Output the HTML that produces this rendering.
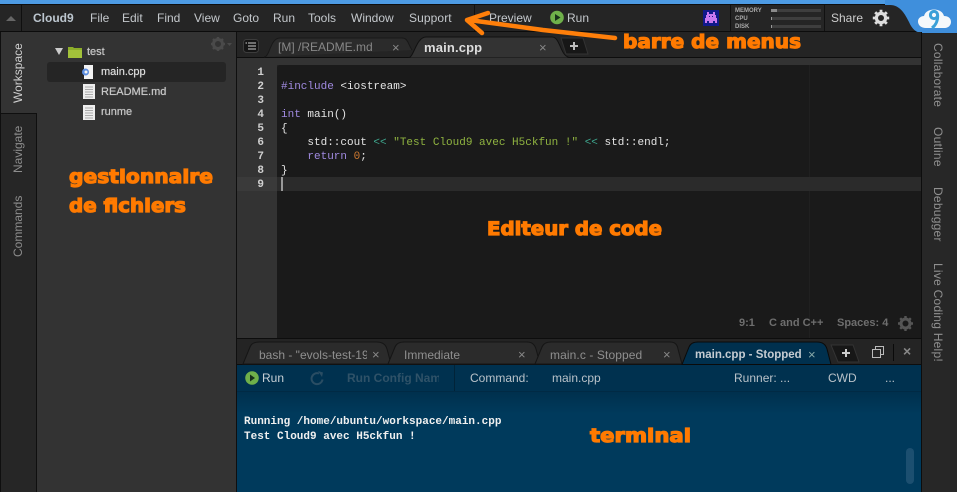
<!DOCTYPE html>
<html><head><meta charset="utf-8">
<style>
html,body{margin:0;padding:0;background:#222}
#r{position:relative;width:957px;height:492px;overflow:hidden;background:#252525;font-family:"Liberation Sans",sans-serif;font-size:12px;color:#ccc}
#r div{position:absolute;white-space:nowrap}
.m{top:11px;font-size:12px;color:#c4c8cc;line-height:14px}
.v{color:#8d8d8d;font-size:12px;transform-origin:0 0;line-height:14px}
.t{top:40px;font-size:12px;color:#888;line-height:15px}
.x{color:#888;font-size:13px;line-height:13px}
.ln{left:237px;width:27px;text-align:right;font:bold 11px/14px "Liberation Mono",monospace;color:#d0d0d0}
.c{left:281px;font:11px/14px "Liberation Mono",monospace;color:#e4e4e4;white-space:pre!important}
.f{left:101px;color:#c8c8c8;font-size:11px;line-height:14px;text-shadow:0 0 .6px #c8c8c8}
.pu{color:#a08ae0}.gr{color:#8fb340}.te{color:#3fa88f}.or{color:#d07a30}
.ct{top:348px;font-size:12px;line-height:14px;color:#8f8f8f}
.rv{letter-spacing:.25px;color:#909090}
</style></head><body>
<div id="r">
<!-- top -->
<div style="left:0;top:0;width:957px;height:4px;background:#4d9be4"></div>
<div style="left:0;top:4px;width:957px;height:1px;background:#0e0e0e"></div>
<div style="left:0;top:5px;width:957px;height:26px;background:#252525"></div>
<div style="left:0;top:31px;width:957px;height:1px;background:#0c0c0c"></div>
<div style="left:21px;top:5px;width:1px;height:26px;background:#0f0f0f"></div>
<div style="left:6px;top:16px;width:0;height:0;border-left:5px solid transparent;border-right:5px solid transparent;border-bottom:5px solid #666"></div>
<div class="m" style="left:33px;font-weight:bold;color:#bcc6cf">Cloud9</div>
<div class="m" style="left:90px">File</div>
<div class="m" style="left:122px">Edit</div>
<div class="m" style="left:157px">Find</div>
<div class="m" style="left:194px">View</div>
<div class="m" style="left:233px">Goto</div>
<div class="m" style="left:273px">Run</div>
<div class="m" style="left:308px">Tools</div>
<div class="m" style="left:351px">Window</div>
<div class="m" style="left:409px;letter-spacing:.1px">Support</div>
<div style="left:474px;top:5px;width:1px;height:26px;background:#111"></div>
<div class="m" style="left:489px">Preview</div>
<svg style="position:absolute;left:550px;top:10px" width="15" height="15" viewBox="0 0 15 15"><circle cx="7" cy="7.5" r="6.8" fill="#6fb04a"/><path d="M5 4l5.5 3.5L5 11z" fill="#17301a"/></svg>
<div class="m" style="left:567px">Run</div>
<!-- invader -->
<div style="left:703px;top:10px;width:16px;height:16px;background:#101a8a"></div>
<svg style="position:absolute;left:703px;top:10px" width="16" height="16" viewBox="0 0 16 16"><path d="M4 2h2v2h4V2h2v3h1v3h1v5h-2v-2h-2v2H6v-2H4v2H2V8h1V5h1z" fill="#c878f0"/><path d="M6 6h1v1H6zM9 6h1v1H9z" fill="#101a8a"/></svg>
<div style="left:730px;top:5px;width:1px;height:26px;background:#111"></div>
<div style="left:824px;top:5px;width:1px;height:26px;background:#111"></div>
<div style="left:735px;top:7px;font-size:6px;line-height:8px;color:#aaa;font-weight:bold">MEMORY</div>
<div style="left:735px;top:15px;font-size:6px;line-height:8px;color:#aaa;font-weight:bold">CPU</div>
<div style="left:735px;top:23px;font-size:6px;line-height:8px;color:#aaa;font-weight:bold">DISK</div>
<div style="left:771px;top:9px;width:50px;height:3px;background:#3e3e3e"></div>
<div style="left:771px;top:9px;width:6px;height:3px;background:#8a8a8a"></div>
<div style="left:771px;top:17px;width:50px;height:3px;background:#3e3e3e"></div>
<div style="left:771px;top:17px;width:1px;height:3px;background:#9a9a9a"></div>
<div style="left:771px;top:25px;width:50px;height:3px;background:#3e3e3e"></div>
<div style="left:771px;top:25px;width:1px;height:3px;background:#9a9a9a"></div>
<div class="m" style="left:831px;color:#ccc">Share</div>
<svg style="position:absolute;left:872px;top:9px" width="18" height="18" viewBox="0 0 18 18"><circle cx="9" cy="9" r="4.6" fill="none" stroke="#ddd" stroke-width="3.2"/><path d="M9 .8v3M9 14.2v3M.8 9h3M14.2 9h3M3.2 3.2l2.1 2.1M12.7 12.7l2.1 2.1M3.2 14.8l2.1-2.1M12.7 5.3l2.1-2.1" stroke="#ddd" stroke-width="2.8"/></svg>
<!-- blue corner -->
<svg style="position:absolute;left:885px;top:0" width="72" height="36" viewBox="0 0 72 36"><path d="M0 0H72V33H38C31 33 27 29 24 22C20 14 15 5 5 5H0z" fill="#3f8fdc"/><path d="M41 28C36 28 33 25 33 21.5C33 18 36 16 39 16C40 12 44 9.500 49 9.500C54 9.500 58 12 59 16C63 16 66 18 66 22C66 25.500 63 28 60 28z" fill="#f4f8fb"/><circle cx="49" cy="15" r="3.600" fill="none" stroke="#3aa0d8" stroke-width="3"/><path d="M52.600 15C53 20 51 25 47 28" fill="none" stroke="#3aa0d8" stroke-width="3"/></svg>
<!-- left rail -->
<div style="left:0;top:32px;width:36px;height:460px;background:#262626"></div>
<div style="left:0;top:32px;width:1px;height:460px;background:#0f0f0f"></div>
<div style="left:1px;top:32px;width:36px;height:81px;background:#333"></div>
<div style="left:1px;top:113px;width:36px;height:1px;background:#0f0f0f"></div>
<div style="left:36px;top:114px;width:1px;height:378px;background:#0f0f0f"></div>
<div class="v" style="left:11px;top:103px;transform:rotate(-90deg);color:#d0d0d0">Workspace</div>
<div class="v" style="left:11px;top:173px;transform:rotate(-90deg)">Navigate</div>
<div class="v" style="left:11px;top:257px;transform:rotate(-90deg)">Commands</div>
<!-- tree -->
<div style="left:37px;top:32px;width:199px;height:460px;background:#333"></div>
<div style="left:236px;top:32px;width:1px;height:460px;background:#0f0f0f"></div>
<svg style="position:absolute;left:210px;top:36px" width="24" height="17" viewBox="0 0 24 17"><circle cx="8" cy="8" r="4.500" fill="none" stroke="#4a4a4a" stroke-width="3"/><path d="M8 1v3M8 12v3M1 8h3M12 8h3M3 3l2 2M11 11l2 2M3 13l2-2M11 5l2-2" stroke="#4a4a4a" stroke-width="2.400"/><path d="M17 7h5l-2.500 3z" fill="#4a4a4a"/></svg>
<div style="left:55px;top:48px;width:0;height:0;border-left:4px solid transparent;border-right:4px solid transparent;border-top:7px solid #ccc"></div>
<svg style="position:absolute;left:68px;top:46px" width="14" height="12" viewBox="0 0 14 12"><path d="M0 1h5l1 1h8v10H0z" fill="#8dae2a"/><path d="M0 4h14v8H0z" fill="#a3c23a"/></svg>
<div class="f" style="left:87px;top:45px">test</div>
<div style="left:47px;top:62px;width:179px;height:20px;background:#252525;border-radius:3px"></div>
<svg style="position:absolute;left:81px;top:65px" width="14" height="14" viewBox="0 0 14 14"><path d="M3 0h9v14H3z" fill="#f2f2f2"/><circle cx="4.500" cy="7" r="3.500" fill="#5b8de0"/><circle cx="5" cy="7" r="1.500" fill="#f2f2f2"/></svg>
<div class="f" style="top:65px;color:#dedede">main.cpp</div>
<svg style="position:absolute;left:83px;top:84px" width="12" height="15" viewBox="0 0 12 15"><path d="M0 0h12v15H0z" fill="#eee"/><path d="M2 3h8M2 5.500h8M2 8h8M2 10.500h8M2 13h8" stroke="#aaa"/></svg>
<div class="f" style="top:85px">README.md</div>
<svg style="position:absolute;left:83px;top:105px" width="12" height="15" viewBox="0 0 12 15"><path d="M0 0h12v15H0z" fill="#eee"/><path d="M2 3h8M2 5.500h8M2 8h8M2 10.500h8M2 13h8" stroke="#aaa"/></svg>
<div class="f" style="top:105px">runme</div>
<!-- editor tabs -->
<div style="left:237px;top:32px;width:684px;height:26px;background:#242424"></div>
<div style="left:237px;top:57px;width:684px;height:1px;background:#0d0d0d"></div>
<div style="left:237px;top:58px;width:684px;height:7px;background:#333"></div>
<svg style="position:absolute;left:243px;top:39px" width="16" height="14" viewBox="0 0 16 14"><rect x=".5" y=".5" width="15" height="13" rx="3" fill="#151515" stroke="#3c3c3c"/><path d="M5 4h8M5 7h8M5 10h8M2.500 4h1.500" stroke="#ccc"/></svg>
<svg style="position:absolute;left:262px;top:36px" width="320" height="22" viewBox="0 0 320 22"><path d="M2 21C8 21 8 2 18 2H140C146 2 146 8 150 14" fill="#2b2b2b" stroke="#181818"/><path d="M146 22C152 22 154 1 164 1H290C298 1 298 18 306 21V22z" fill="#333" stroke="#111"/></svg>
<div class="t" style="left:278px">[M] /README.md</div>
<div class="x" style="left:392px;top:41px">×</div>
<div class="t" style="left:424px;color:#ddd;font-weight:bold;font-size:13px;letter-spacing:.15px">main.cpp</div>
<div class="x" style="left:539px;top:41px">×</div>
<svg style="position:absolute;left:559px;top:37px" width="30" height="18" viewBox="0 0 30 18"><path d="M2 1H24L29 17H7z" fill="#171717" stroke="#333"/><path d="M15 5v8M11 9h8" stroke="#bbb" stroke-width="2"/></svg>
<!-- editor -->
<div style="left:237px;top:65px;width:40px;height:274px;background:#333"></div>
<div style="left:277px;top:65px;width:644px;height:273px;background:#1a1a1a;border-top-left-radius:3px"></div>
<div style="left:809px;top:65px;width:1px;height:273px;background:#202020"></div>
<div style="left:277px;top:177px;width:644px;height:14px;background:#2b2b2b"></div>
<div style="left:237px;top:177px;width:40px;height:14px;background:#3a3a3a"></div>
<div style="left:281px;top:177px;width:2px;height:14px;background:#999"></div>
<div class="ln" style="top:66px">1</div><div class="ln" style="top:80px">2</div><div class="ln" style="top:94px">3</div><div class="ln" style="top:108px">4</div><div class="ln" style="top:122px">5</div><div class="ln" style="top:136px">6</div><div class="ln" style="top:150px">7</div><div class="ln" style="top:164px">8</div><div class="ln" style="top:178px">9</div>
<div class="c" style="top:80px"><span class="pu">#include</span> &lt;iostream&gt;</div>
<div class="c" style="top:108px"><span class="pu">int</span> main()</div>
<div class="c" style="top:122px">{</div>
<div class="c" style="top:136px">    std::cout <span class="te">&lt;&lt;</span> <span class="gr">"Test Cloud9 avec H5ckfun !"</span> <span class="te">&lt;&lt;</span> std::endl;</div>
<div class="c" style="top:150px">    <span class="pu">return</span> <span class="or">0</span>;</div>
<div class="c" style="top:164px">}</div>
<div style="left:739px;top:316px;font-size:11px;font-weight:bold;line-height:14px;color:#6e6e6e">9:1</div>
<div style="left:769px;top:316px;font-size:11px;font-weight:bold;line-height:14px;color:#6e6e6e">C and C++</div>
<div style="left:837px;top:316px;font-size:11px;font-weight:bold;line-height:14px;color:#6e6e6e">Spaces: 4</div>
<svg style="position:absolute;left:897px;top:315px" width="17" height="17" viewBox="0 0 17 17"><circle cx="8.500" cy="8.500" r="4.500" fill="none" stroke="#555" stroke-width="3"/><path d="M8.500 1v3M8.500 13v3M1 8.500h3M13 8.500h3M3.200 3.200l2 2M11.800 11.800l2 2M3.200 13.800l2-2M11.800 5.200l2-2" stroke="#555" stroke-width="2.400"/></svg>
<!-- right rail -->
<div style="left:921px;top:32px;width:1px;height:460px;background:#0d0d0d"></div>
<div style="left:922px;top:34px;width:35px;height:458px;background:#272727"></div>
<div class="v rv" style="left:945px;top:43px;transform:rotate(90deg)">Collaborate</div>
<div class="v rv" style="left:945px;top:127px;transform:rotate(90deg)">Outline</div>
<div class="v rv" style="left:945px;top:187px;transform:rotate(90deg)">Debugger</div>
<div class="v rv" style="left:945px;top:263px;transform:rotate(90deg)">Live Coding Help!</div>
<!-- console tabs -->
<div style="left:237px;top:338px;width:684px;height:1px;background:#0d0d0d"></div>
<div style="left:237px;top:339px;width:684px;height:25px;background:#242424"></div>
<div style="left:237px;top:364px;width:684px;height:1px;background:#0d0d0d"></div>
<svg style="position:absolute;left:237px;top:339px" width="684" height="26" viewBox="0 0 684 26">
<g fill="#2b2b2b" stroke="#151515">
<path d="M6 25L13 8Q15 3 22 3H140Q148 3 150 10L154 25z"/>
<path d="M151 25L158 8Q160 3 167 3H290Q297 3 299 10L303 25z"/>
<path d="M298 25L305 8Q307 3 314 3H433Q440 3 441 10L445 25z"/>
</g>
<path d="M445 25.500L452 8Q454 3 461 3H580Q588 3 590 10L594 25.500z" fill="#00304e" stroke="#0a0a0a"/>
<path d="M594 6H616L622 23H601z" fill="#171717" stroke="#333"/><path d="M609 10v8M605 14h8" stroke="#ccc" stroke-width="2"/></svg>
<div class="ct" style="left:259px;width:108px;overflow:hidden">bash - "evols-test-19</div>
<div class="x" style="left:372px;top:348px">×</div>
<div class="ct" style="left:404px">Immediate</div>
<div class="x" style="left:518px;top:348px">×</div>
<div class="ct" style="left:550px;letter-spacing:.1px">main.c - Stopped</div>
<div class="x" style="left:663px;top:348px">×</div>
<div class="ct" style="left:695px;color:#c5ccd2;font-weight:bold;font-size:11.500px">main.cpp - Stopped</div>
<div class="x" style="left:808px;top:348px;color:#8aa">×</div>
<svg style="position:absolute;left:871px;top:345px" width="14" height="14" viewBox="0 0 14 14"><path d="M1.500 4.500h8v8h-8zM4.500 4.500v-3h8v8h-3" fill="none" stroke="#bbb"/></svg>
<div style="left:893px;top:344px;width:1px;height:17px;background:#0a0a0a"></div>
<div class="x" style="left:903px;top:345px;font-weight:bold;font-size:14px">×</div>
<!-- console -->
<div style="left:237px;top:365px;width:684px;height:127px;background:#003a5c"></div>
<div style="left:237px;top:365px;width:684px;height:26px;background:#00314f"></div>
<div style="left:237px;top:391px;width:684px;height:1px;background:#012a44"></div>
<div style="left:237px;top:392px;width:684px;height:22px;background:linear-gradient(#00304d,#003a5c)"></div>
<div style="left:454px;top:365px;width:1px;height:26px;background:#012338"></div>
<svg style="position:absolute;left:245px;top:371px" width="14" height="14" viewBox="0 0 14 14"><circle cx="7" cy="7" r="6.800" fill="#6fb04a"/><path d="M5 3.500l5 3.500-5 3.500z" fill="#17301a"/></svg>
<div style="left:262px;top:371px;font-size:12px;line-height:14px;color:#c8d0d6">Run</div>
<svg style="position:absolute;left:310px;top:371px" width="15" height="15" viewBox="0 0 15 15"><path d="M12.500 8.500A5.500 5.500 0 1 1 9 2.500" fill="none" stroke="#2a4d63" stroke-width="2"/><path d="M8 0l5 1.500-1 4.500z" fill="#2a4d63"/></svg>
<div style="left:347px;top:371px;width:92px;overflow:hidden;font-size:12px;font-weight:bold;line-height:14px;color:#2f5268">Run Config Nam</div>
<div style="left:470px;top:371px;font-size:12px;line-height:14px;color:#b9c2c9">Command:</div>
<div style="left:552px;top:371px;font-size:12px;line-height:14px;color:#b9c2c9">main.cpp</div>
<div style="left:734px;top:371px;font-size:12px;line-height:14px;color:#b9c2c9">Runner: ...</div>
<div style="left:828px;top:371px;font-size:12px;line-height:14px;color:#b9c2c9">CWD</div>
<div style="left:885px;top:371px;font-size:12px;line-height:14px;color:#b9c2c9">...</div>
<div style="left:244px;top:415px;font:bold 11px/14px 'Liberation Mono',monospace;color:#f0f0f0">Running /home/ubuntu/workspace/main.cpp</div>
<div style="left:244px;top:430px;font:bold 11px/15px 'Liberation Mono',monospace;color:#f0f0f0">Test Cloud9 avec H5ckfun !</div>
<div style="left:906px;top:448px;width:8px;height:36px;background:#1c4f70;border-radius:4px"></div>
<!-- annotations -->
<svg style="position:absolute;left:0;top:0;overflow:visible" width="957" height="492" viewBox="0 0 957 492">
<g fill="none" stroke="#ff7f0a" stroke-width="4.500" stroke-linecap="round" stroke-linejoin="round"><path d="M615 38L543 30 469 20"/><path d="M488 13L467 20 482 33"/></g>
<g fill="#ff7a00" stroke="#ff7a00" stroke-width="1.200" font-family="'DejaVu Sans',sans-serif" font-weight="bold">
<text x="623" y="48" font-size="19" textLength="178" lengthAdjust="spacingAndGlyphs">barre de menus</text>
<text x="69" y="183" font-size="19" textLength="144" lengthAdjust="spacingAndGlyphs">gestionnaire</text>
<text x="69" y="212" font-size="19" textLength="117" lengthAdjust="spacingAndGlyphs">de fichiers</text>
<text x="487" y="235" font-size="19" textLength="175" lengthAdjust="spacingAndGlyphs">Editeur de code</text>
<text x="590" y="442" font-size="19" textLength="101" lengthAdjust="spacingAndGlyphs">terminal</text>
</g></svg>
</div>
</body></html>
